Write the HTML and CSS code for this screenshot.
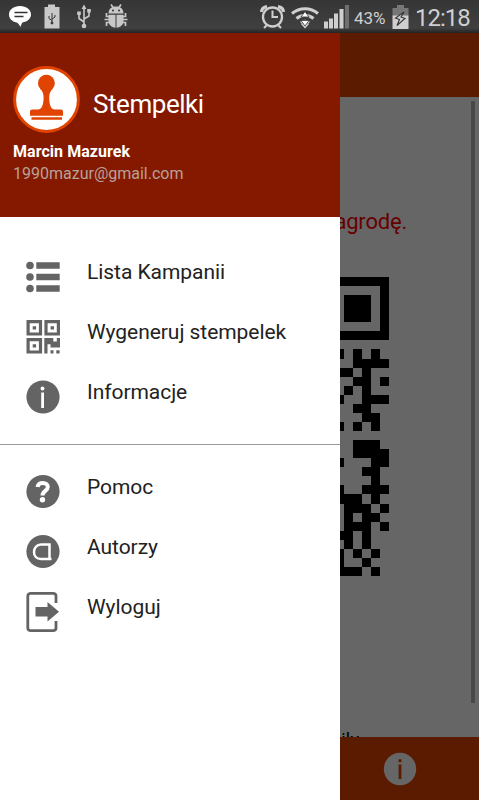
FILE: index.html
```
<!DOCTYPE html>
<html lang="pl">
<head>
<meta charset="utf-8">
<title>Stempelki</title>
<link rel="stylesheet" href="styles.css">
</head>
<body>
<div class="phone">
  <header class="status">
    <svg class="status-left" width="140" height="33" viewBox="0 0 140 33">
      <path fill="#fff" d="M20 6c-6.500 0-11 3.600-11 8.500 0 4 3 7 7.500 8 1.500.5 2.500 2 4 4.500.8-2 1-3.500 2-4.500 5-.8 8.500-4 8.500-8 0-4.900-4.500-8.500-11-8.500z"/>
      <path stroke="#333" stroke-width="1.500" d="M14.500 12.500h13M14.500 16.500h9"/>
      <path fill="#c8c8c8" d="M48 4.500h7V7h4.500v21.500h-15V7H48z"/>
      <g fill="none" stroke="#333" stroke-width="1"><path d="M52 13v10M52 20.500l-3-2V16M52 19l3-2v-2"/><circle cx="52" cy="23" r="1" fill="#333"/></g>
      <g fill="none" stroke="#c8c8c8" stroke-width="1.600"><path d="M84 8v17M84 22l-5-3.500V13M84 19l5-3V11"/></g>
      <path fill="#c8c8c8" d="M84 4.500l2.500 4.500h-5zM77.200 11.500h3.600V15h-3.600zM87.200 9h3.600v3.500h-3.600z"/><circle cx="84" cy="26" r="2.300" fill="#c8c8c8"/>
      <path fill="#c8c8c8" d="M108.500 13.500c0-4.500 3-7 7.500-7s7.500 2.500 7.500 7zM108.500 14.800h7v12.900c-4-.3-7-3-7-6.700zM116.500 14.800h7V21c0 3.700-3 6.400-7 6.700z"/>
      <path fill="none" stroke="#c8c8c8" stroke-width="1.700" d="M111 4.500l2.500 3.500M121 4.500L118.500 8M109 16.500h-2.500V13M123 16.500h2.500V13M104.500 19.500h4.500M123 19.500h4.500M109 22.500h-2.500V26M123 22.500h2.500V26"/>
      <circle cx="113" cy="10.500" r="1" fill="#333"/><circle cx="119" cy="10.500" r="1" fill="#333"/>
    </svg>
    <svg class="signals" width="100" height="33" viewBox="0 0 100 33">
      <g fill="none" stroke="#cfcfcf"><circle cx="22.500" cy="17" r="9.500" stroke-width="2.300"/><path stroke-width="2" d="M22.500 10.500V17H28M17 25l-3 3M28 25l3 3"/><path stroke-width="3.200" d="M11.500 12c.3-3 2.500-5 5.500-5.300M33.500 12c-.3-3-2.500-5-5.500-5.300"/></g>
      <g fill="none" stroke="#cfcfcf" stroke-width="3"><path d="M42 13.500c7.500-6.500 18.500-6.500 26 0M46.500 18.500c5-4.200 12-4.200 17 0M51 23c2.500-2 5.500-2 8 0"/></g>
      <path fill="#cfcfcf" d="M51 24h8l-4 4.500z"/>
      <path fill="#fff" stroke="#333" stroke-width=".8" d="M55 11.500l4 5.500h-8zM55 26l4-5.500h-8z"/>
      <path fill="#cfcfcf" d="M74 21.500h4v7h-4zM79 18.500h4v10h-4zM84 13.500h4v15h-4zM89.500 9h4v19.500h-4z"/><path fill="#707070" d="M95 5h4v23.500h-4z"/>
    </svg>
    <span class="percent">43%</span>
    <svg class="battery" width="17" height="33" viewBox="0 0 17 33"><path fill="#777" d="M5 5h7v3h4.500v8H.500V8H5z"/><path fill="#cfcfcf" d="M.500 15.500h16V29H.500z"/><path fill="#cfcfcf" stroke="#333" stroke-width="1.100" d="M12 12L3.500 18l4 1.500-2.500 6 8-7-4-1.500z"/></svg>
    <time class="clock">12:18</time>
  </header>
  <main class="screen">
    <div class="appbar"></div>
    <section class="content">
      <p class="reward">nagrodę.</p>
      <svg class="qr" viewBox="0 0 6 33" preserveAspectRatio="none" shape-rendering="crispEdges">
        <path d="M0 0h6v7H0V6h5V1H0zM1 2h3v3H1zM0 8h1v1H0zM2 8h1v1H2zM4 8h1v1H4zM2 9h4v1H2zM0 10h2v1H0zM3 10h1v1H3zM2 11h2v1H2zM5 11h1v1H5zM1 12h1v1H1zM3 12h1v1H3zM0 13h1v1H0zM3 13h3v1H3zM2 14h2v1H2zM3 15h2v1H3zM0 16h1v1H0zM2 16h1v1H2zM4 16h1v1H4zM2 18h3v1H2zM2 19h4v1H2zM0 20h1v1H0zM4 20h2v1H4zM3 21h2v1H3zM4 22h1v1H4zM0 23h1v1H0zM3 23h3v1H3zM0 24h3v1H0zM4 24h1v1H4zM1 25h3v1H1zM5 25h1v1H5zM1 26h1v1H1zM3 26h2v1H3zM1 27h3v1H1zM5 27h1v1H5zM0 28h2v1H0zM3 28h1v1H3zM1 29h1v1H1zM3 29h1v1H3zM0 30h1v1H0zM2 30h1v1H2zM4 30h1v1H4zM0 31h1v1H0zM3 31h1v1H3zM0 32h3v1H0zM4 32h1v1H4z"/>
      </svg>
      <p class="note">iły</p>
      <div class="scrollbar"></div>
    </section>
    <footer class="footer">
      <svg width="34" height="34" viewBox="0 0 34 34"><circle cx="17" cy="17" r="16.200" fill="#fff"/><circle cx="17" cy="8.700" r="1.600" fill="#e04400"/><path fill="#e04400" d="M15.600 12.500h2.800V27h-2.800z"/></svg>
    </footer>
    <div class="scrim"></div>
    <aside class="drawer">
      <div class="profile">
        <div class="brand">
          <svg width="67" height="67" viewBox="0 0 67 67"><circle cx="33.500" cy="33.500" r="31.900" fill="#fff" stroke="#e04400" stroke-width="3"/><circle cx="33.400" cy="17.200" r="8.400" fill="#e04400"/><path fill="#e04400" d="M28 23h10.800c-1.300 2.500-2.600 5-2.600 8 0 5 .8 12.400 5.300 12.400H48q2 0 2 2v4.400H17v-4.400q0-2 2-2h6.300c4.500 0 5.300-7.400 5.300-12.400 0-3-1.300-5.500-2.600-8zM18.500 51.300H49v2.400H18.500z"/></svg>
          <h1>Stempelki</h1>
        </div>
        <p class="name">Marcin Mazurek</p>
        <p class="mail">1990mazur@gmail.com</p>
      </div>
      <nav class="menu">
        <a class="item"><svg width="34" height="40" viewBox="0 0 34 40" fill="#646464"><circle cx="4" cy="8.500" r="3.800"/><circle cx="4" cy="20" r="3.800"/><circle cx="4" cy="31.500" r="3.800"/><path d="M10.300 5.300h23.400v6.400H10.300zM10.300 16.800h23.400v6.400H10.300zM10.300 28.300h23.400v6.400H10.300z"/></svg><span>Lista Kampanii</span></a>
        <a class="item"><svg width="34" height="40" viewBox="0 0 34 40"><g fill="none" stroke="#646464" stroke-width="3.200"><path d="M2.100 4.600h12.400V17H2.100zM20 4.600h12.400V17H20zM2.100 22.600h12.400V35H2.100z"/></g><path fill="#646464" d="M6.700 9.200h3.400v3.400H6.700zM24.600 9.200H28v3.400h-3.400zM6.700 27.200h3.400v3.400H6.700zM18.300 21h9v3.500h3.500V21H34v9.500h-9.500v-3.200h-3v9.300h-3.200zM24.500 33.300h3v3.300h-3zM30.300 33.300h3.300v3.300h-3.300z"/></svg><span>Wygeneruj stempelek</span></a>
        <a class="item"><svg width="34" height="40" viewBox="0 0 34 40"><circle cx="17" cy="20" r="16.600" fill="#646464"/><circle cx="16.500" cy="11.500" r="1.900" fill="#fff"/><path fill="#fff" d="M15.200 15.500h2.800V31h-2.800z"/></svg><span>Informacje</span></a>
      </nav>
      <nav class="menu second">
        <a class="item"><svg width="34" height="40" viewBox="0 0 34 40"><circle cx="17" cy="19.500" r="16.600" fill="#646464"/><path fill="none" stroke="#fff" stroke-width="4" d="M11.500 15c.5-3 2.700-4 5.300-4 3 0 5 1.600 5 4 0 4-5.300 3.700-5.300 8.500"/><circle cx="16.500" cy="27.800" r="2.700" fill="#fff"/></svg><span>Pomoc</span></a>
        <a class="item"><svg width="34" height="40" viewBox="0 0 34 40"><circle cx="17" cy="19.500" r="16.600" fill="#646464"/><path fill="none" stroke="#fff" stroke-width="2.500" d="M25.500 27H15c-4.500 0-7-3-7-7s2.700-7.500 7-7.500h8.500V27"/></svg><span>Autorzy</span></a>
        <a class="item"><svg width="34" height="40" viewBox="0 0 34 40"><path fill="none" stroke="#646464" stroke-width="2.800" d="M30 11V4q0-2.600-3-2.600H5Q1.800 1.400 1.800 4v32q0 2.600 3.200 2.600h22q3 0 3-2.600v-7"/><path fill="#646464" d="M9.500 15h12v-5L33 19.800 21.500 29.500v-5h-12z"/></svg><span>Wyloguj</span></a>
      </nav>
    </aside>
  </main>
</div>
</body>
</html>
```
FILE: styles.css
```
* { box-sizing: border-box; }
body, p, h1 { margin: 0; }
body { font-family: Roboto, "Liberation Sans", sans-serif; }
.phone { width: 479px; height: 800px; display: flex; flex-direction: column; overflow: hidden; }
.status { height: 33px; flex: none; display: flex; align-items: center; background: linear-gradient(#353535, #404040 85%, #242424); color: #cfcfcf; }
.status svg { flex: none; }
.signals { margin-left: 110px; }
.percent { width: 36px; margin-left: 4px; font-size: 17px; letter-spacing: -.1px; padding-top: 2px; }
.battery { margin-left: 2px; }
.clock { margin-left: 6px; font-size: 24px; letter-spacing: -1px; padding-top: 2px; white-space: nowrap; }
.screen { position: relative; flex: 1; display: flex; flex-direction: column; background: #fff; min-height: 0; }
.appbar { height: 64px; flex: none; background: #e04400; }
.content { position: relative; flex: 1; overflow: hidden; display: flex; flex-direction: column; align-items: flex-end; padding: 110px 72px 0 0; }
.reward { color: #f00; font-size: 22px; line-height: 30px; letter-spacing: -.2px; }
.qr { width: 54.36px; height: 299px; margin: 40px 18px 0 0; flex: none; }
.note { font-size: 18px; line-height: 24px; margin: 152px 48px 0 0; flex: none; }
.scrollbar { position: absolute; right: 4px; top: 4px; width: 4px; height: 602px; background: #b4b4b4; }
.footer { height: 63px; flex: none; background: #e04400; display: flex; align-items: center; justify-content: flex-end; padding-right: 62px; }
.scrim { position: absolute; inset: 0; background: rgba(0, 0, 0, .6); }
.drawer { position: absolute; left: 0; top: 0; bottom: 0; width: 340px; background: #fff; }
.profile { height: 184px; background: #841900; color: #fff; padding: 33px 13px 0; }
.brand { display: flex; align-items: center; gap: 13px; height: 67px; }
.brand h1 { font-size: 26px; font-weight: 400; line-height: 32px; padding-top: 8px; letter-spacing: -.45px; }
.name { font-size: 16px; font-weight: 700; line-height: 22px; margin-top: 8px; letter-spacing: .05px; }
.mail { font-size: 16px; line-height: 22px; color: #b9a09a; }
.menu { padding: 30px 26px 17px; border-bottom: 1px solid #999; }
.menu.second { padding-top: 17px; border: 0; }
.item { display: flex; align-items: center; gap: 27px; height: 60px; color: #222; font-size: 21px; white-space: nowrap; }
.item span { padding-bottom: 10px; letter-spacing: -.05px; }
```
